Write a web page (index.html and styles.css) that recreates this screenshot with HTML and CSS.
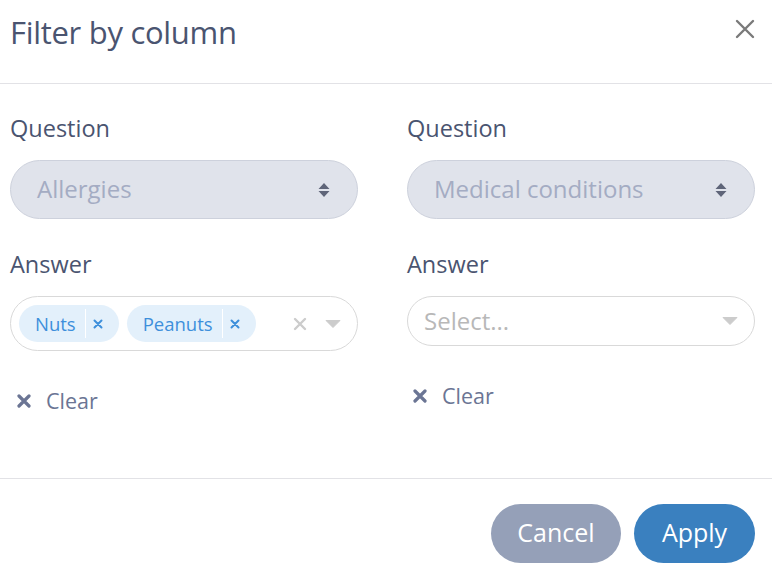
FILE: index.html
```html
<!DOCTYPE html>
<html lang="en">
<head>
<meta charset="utf-8">
<title>Filter by column</title>
<link rel="stylesheet" href="styles.css">
</head>
<body>
<div class="modal">
  <div class="modal-header">
    <h2 class="modal-title">Filter by column</h2>
    <button class="close-btn" aria-label="Close">
      <svg width="20" height="20" viewBox="0 0 20 20"><path d="M2 2 L18 18 M18 2 L2 18" stroke="#7a7a7a" stroke-width="2.4" stroke-linecap="round"/></svg>
    </button>
  </div>
  <div class="modal-body">
    <div class="filter-col">
      <div class="field-label">Question</div>
      <div class="q-select">
        <span class="q-value">Allergies</span>
        <svg class="updown" width="12" height="16" viewBox="0 0 12 16"><path d="M6 1 L11.5 7 H0.5 Z M6 15 L11.5 9 H0.5 Z" fill="#5f6579"/></svg>
      </div>
      <div class="field-label answer-label">Answer</div>
      <div class="multi">
        <div class="tags">
          <span class="tag"><span class="tag-text">Nuts</span><span class="tag-x"><svg width="10" height="10" viewBox="0 0 10 10"><path d="M1.5 1.5 L8.5 8.5 M8.5 1.5 L1.5 8.5" stroke="#3d8fdb" stroke-width="2" stroke-linecap="round"/></svg></span></span>
          <span class="tag"><span class="tag-text">Peanuts</span><span class="tag-x"><svg width="10" height="10" viewBox="0 0 10 10"><path d="M1.5 1.5 L8.5 8.5 M8.5 1.5 L1.5 8.5" stroke="#3d8fdb" stroke-width="2" stroke-linecap="round"/></svg></span></span>
        </div>
        <div class="indicators">
          <svg width="14" height="14" viewBox="0 0 14 14"><path d="M2 2 L12 12 M12 2 L2 12" stroke="#cccccc" stroke-width="2.4" stroke-linecap="round"/></svg>
          <svg class="caret" width="16" height="10" viewBox="0 0 16 10"><path d="M1 1.5 H15 L8 8.5 Z" fill="#cccccc" stroke="#cccccc" stroke-width="1" stroke-linejoin="round"/></svg>
        </div>
      </div>
      <div class="clear clear-left">
        <svg width="14" height="14" viewBox="0 0 14 14"><path d="M2 2 L12 12 M12 2 L2 12" stroke="#6b7594" stroke-width="3.2" stroke-linecap="round"/></svg>
        <span>Clear</span>
      </div>
    </div>
    <div class="filter-col">
      <div class="field-label">Question</div>
      <div class="q-select">
        <span class="q-value">Medical conditions</span>
        <svg class="updown" width="12" height="16" viewBox="0 0 12 16"><path d="M6 1 L11.5 7 H0.5 Z M6 15 L11.5 9 H0.5 Z" fill="#5f6579"/></svg>
      </div>
      <div class="field-label answer-label">Answer</div>
      <div class="single">
        <span class="placeholder">Select...</span>
        <svg class="caret" width="16" height="10" viewBox="0 0 16 10"><path d="M1 1.5 H15 L8 8.5 Z" fill="#cccccc" stroke="#cccccc" stroke-width="1" stroke-linejoin="round"/></svg>
      </div>
      <div class="clear clear-right">
        <svg width="14" height="14" viewBox="0 0 14 14"><path d="M2 2 L12 12 M12 2 L2 12" stroke="#6b7594" stroke-width="3.2" stroke-linecap="round"/></svg>
        <span>Clear</span>
      </div>
    </div>
  </div>
  <div class="modal-footer">
    <button class="btn btn-cancel">Cancel</button>
    <button class="btn btn-apply">Apply</button>
  </div>
</div>
</body>
</html>
```
FILE: styles.css
```css
* { box-sizing: border-box; }
html, body { margin: 0; padding: 0; background: #ffffff; }
body {
  font-family: "Open Sans", "Lato", sans-serif;
  color: #4a5470;
  width: 772px;
  height: 572px;
  overflow: hidden;
}
.modal { width: 772px; height: 572px; display: flex; flex-direction: column; }
.modal-header {
  height: 84px;
  border-bottom: 1px solid #e2e2e6;
  display: flex;
  justify-content: space-between;
  align-items: flex-start;
  padding: 12px 17px 0 10px;
}
.modal-title {
  margin: 0;
  font-size: 31px;
  font-weight: 400;
  line-height: 40px;
  letter-spacing: -0.3px;
  color: #4a5470;
}
.close-btn {
  border: 0;
  background: none;
  padding: 0;
  margin-top: 7px;
  width: 20px;
  height: 20px;
  cursor: pointer;
}
.modal-body {
  height: 394px;
  display: grid;
  grid-template-columns: 348px 348px;
  column-gap: 49px;
  padding: 30px 17px 0 10px;
}
.filter-col { display: flex; flex-direction: column; }
.field-label {
  font-size: 23.5px;
  line-height: 28px;
  height: 30px;
  color: #4a5470;
  margin-bottom: 16px;
}
.answer-label { margin-top: 31px; }
.q-select {
  height: 59px;
  border: 1px solid #cdd1dc;
  background: #e0e3eb;
  border-radius: 30px;
  display: flex;
  align-items: center;
  justify-content: space-between;
  padding: 0 27px 0 26px;
}
.q-value { font-size: 24px; color: #a4acc3; padding-bottom: 3px; }
.multi {
  height: 55px;
  border: 1px solid #d9d9d9;
  border-radius: 28px;
  display: flex;
  align-items: center;
  justify-content: space-between;
  padding: 0 16px 0 8px;
}
.tags { display: flex; gap: 8px; }
.tag {
  height: 37px;
  background: #e3f0fb;
  border-radius: 19px;
  display: flex;
  align-items: center;
  padding-left: 16px;
  color: #3d8fdb;
  font-size: 18.5px;
}
.tag-text { padding-right: 9px; padding-bottom: 1px; }
.tag-x {
  height: 29px;
  border-left: 1px solid #ffffff;
  display: flex;
  align-items: center;
  padding: 0 16px 0 7px;
}
.indicators { display: flex; align-items: center; gap: 18px; }
.single {
  height: 50px;
  border: 1px solid #d9d9d9;
  border-radius: 25px;
  display: flex;
  align-items: center;
  justify-content: space-between;
  padding: 0 16px 0 16px;
}
.placeholder { font-size: 24px; color: #b8b8b8; padding-bottom: 2px; }
.clear {
  display: flex;
  align-items: center;
  gap: 15px;
  height: 24px;
  font-size: 21.5px;
  color: #6b7594;
  padding-left: 7px;
}
.clear span { padding-bottom: 2px; }
.clear-left { margin-top: 38px; }
.clear-right { margin-top: 38px; padding-left: 6px; }
.modal-footer {
  flex: 1;
  border-top: 1px solid #e2e2e6;
  display: flex;
  justify-content: flex-end;
  align-items: flex-start;
  gap: 13px;
  padding: 25px 17px 0 0;
}
.btn {
  height: 59px;
  border: 0;
  border-radius: 30px;
  color: #ffffff;
  font-family: inherit;
  font-size: 25px;
  padding: 0 0 3px;
  cursor: pointer;
}
.btn-cancel { width: 130px; background: #95a0b8; }
.btn-apply { width: 121px; background: #3a80bf; }
```
